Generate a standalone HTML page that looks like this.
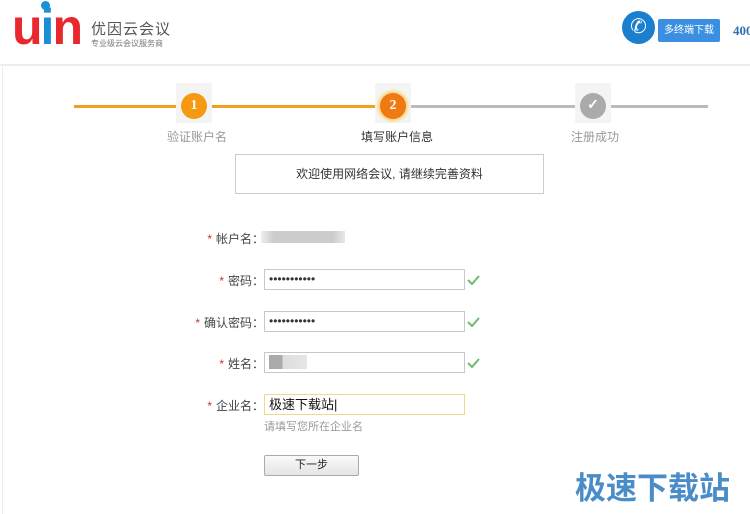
<!DOCTYPE html>
<html><head><meta charset="utf-8"><style>
*{margin:0;padding:0;box-sizing:border-box}
body{width:750px;height:514px;background:#fff;font-family:"Liberation Sans","Noto Sans CJK SC",sans-serif;position:relative;overflow:hidden;font-size:12px;color:#333}
.a{position:absolute}
.lbl{position:absolute;right:486px;font-size:12px;color:#444;white-space:nowrap}
.lbl b{color:#c33;font-weight:normal;margin-right:4px}
.inp{position:absolute;left:264px;width:201px;height:21px;border:1px solid #c8c8c8;font-size:12px;padding-left:4px;line-height:19px}
.ok{position:absolute;left:467px;width:13px;height:10px}
.circ{position:absolute;width:26px;height:26px;border-radius:50%;color:#fff;font-family:"Liberation Serif",serif;font-weight:bold;font-size:14px;text-align:center;line-height:26px}
.bgsq{position:absolute;width:36px;height:40px;background:#f4f4f4}
</style></head><body>
<div class="a" style="left:12px;top:4px;font-family:'Liberation Sans',sans-serif;font-weight:900;font-size:50px;letter-spacing:-2px;line-height:46px"><span style="color:#e8282d">u</span><span style="color:#1a8fd6">i</span><span style="color:#e8282d">n</span></div>
<div class="a" style="left:41px;top:1px;width:9px;height:9px;border-radius:50%;background:#1a8fd6"></div>
<div class="a" style="left:91px;top:18px;font-size:15px;color:#555;letter-spacing:1px">优因云会议</div>
<div class="a" style="left:91px;top:38px;font-size:8px;color:#777">专业级云会议服务商</div>
<div class="a" style="left:622px;top:11px;width:33px;height:33px;border-radius:50%;background:#1a7fcf;color:#fff;font-size:20px;text-align:center;line-height:33px">✆</div>
<div class="a" style="left:658px;top:19px;width:62px;height:23px;background:#3b8fe0;border-radius:2px;color:#fff;font-size:10px;text-align:center;line-height:23px">多终端下载</div>
<div class="a" style="left:733px;top:23px;font-family:'Liberation Serif',serif;font-weight:bold;color:#2a70b0;font-size:13px">400</div>
<div class="a" style="left:0;top:64px;width:750px;height:2px;background:#ececec"></div>
<div class="a" style="left:2px;top:66px;width:1px;height:448px;background:#eee"></div>

<div class="a" style="left:74px;top:105px;width:319px;height:3px;background:#f0a020"></div>
<div class="a" style="left:393px;top:105px;width:315px;height:3px;background:#bbb"></div>
<div class="bgsq" style="left:176px;top:83px"></div>
<div class="bgsq" style="left:375px;top:83px"></div>
<div class="bgsq" style="left:575px;top:83px"></div>
<div class="circ" style="left:181px;top:93px;background:#f59a10">1</div>
<div class="circ" style="left:380px;top:93px;background:#ef7a12;box-shadow:0 0 3px 2px #fbd070">2</div>
<div class="circ" style="left:580px;top:93px;background:#aaa;font-size:14px">✓</div>
<div class="a" style="left:167px;top:128px;font-size:12px;color:#999">验证账户名</div>
<div class="a" style="left:361px;top:128px;font-size:12px;color:#333">填写账户信息</div>
<div class="a" style="left:571px;top:128px;font-size:12px;color:#999">注册成功</div>

<div class="a" style="left:235px;top:154px;width:309px;height:40px;border:1px solid #ccc;text-align:center;line-height:38px;font-size:12px;color:#333">欢迎使用网络会议, 请继续完善资料</div>

<div class="lbl" style="top:230px"><b>*</b>帐户名：</div>
<div class="a" style="left:261px;top:231px;width:84px;height:12px;background:linear-gradient(90deg,#eee,#ccc 15%,#ccc 85%,#e8e8e8)"></div>
<div class="lbl" style="top:272px"><b>*</b>密码：</div>
<div class="inp" style="top:269px">•••••••••••</div>
<div class="lbl" style="top:314px"><b>*</b>确认密码：</div>
<div class="inp" style="top:311px">•••••••••••</div>
<div class="lbl" style="top:355px"><b>*</b>姓名：</div>
<div class="inp" style="top:352px"><span style="display:inline-block;width:38px;height:14px;margin-top:2px;background:linear-gradient(90deg,#aaa 35%,#ddd 35%,#e6e6e6)"></span></div>
<div class="lbl" style="top:397px"><b>*</b>企业名：</div>
<div class="inp" style="top:394px;border-color:#f0d890;font-size:13px;color:#111">极速下载站|</div>
<div class="a" style="left:264px;top:418px;font-size:11px;color:#999">请填写您所在企业名</div>
<svg class="ok" style="top:275px" viewBox="0 0 13 10"><path d="M1 5 L5 9 L12 1" stroke="#6cbb6c" stroke-width="2" fill="none"/></svg>
<svg class="ok" style="top:317px" viewBox="0 0 13 10"><path d="M1 5 L5 9 L12 1" stroke="#6cbb6c" stroke-width="2" fill="none"/></svg>
<svg class="ok" style="top:358px" viewBox="0 0 13 10"><path d="M1 5 L5 9 L12 1" stroke="#6cbb6c" stroke-width="2" fill="none"/></svg>
<div class="a" style="left:264px;top:455px;width:95px;height:21px;border:1px solid #aaa;border-radius:2px;background:linear-gradient(#fafafa,#e4e4e4);text-align:center;line-height:19px;font-size:11px;color:#222">下一步</div>
<div class="a" style="left:575px;top:463px;font-size:31px;font-weight:bold;color:#4a8cc8;letter-spacing:0px">极速下载站</div>
</body></html>
